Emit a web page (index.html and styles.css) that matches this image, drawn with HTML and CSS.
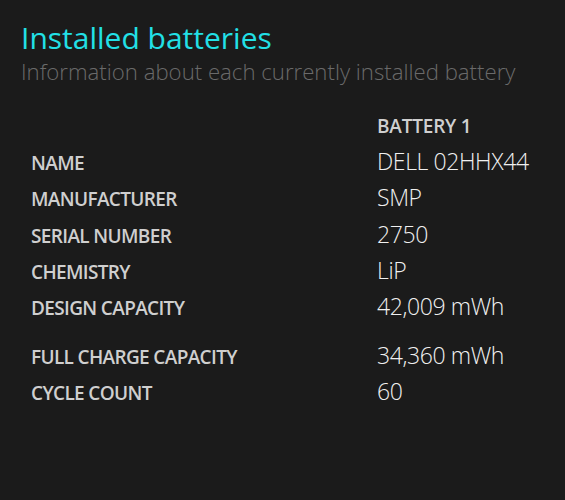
FILE: index.html
```html
<!DOCTYPE html>
<html>
<head>
<meta charset="utf-8">
<link rel="stylesheet" href="styles.css">
</head>
<body>
<div class="page">
  <h1 class="title">Installed batteries</h1>
  <p class="subtitle">Information about each currently installed battery</p>
  <div class="props">
    <div class="row head"><span class="label"></span><span class="colhead">BATTERY 1</span></div>
    <div class="row"><span class="label">NAME</span><span class="value">DELL 02HHX44</span></div>
    <div class="row"><span class="label">MANUFACTURER</span><span class="value">SMP</span></div>
    <div class="row"><span class="label">SERIAL NUMBER</span><span class="value">2750</span></div>
    <div class="row"><span class="label">CHEMISTRY</span><span class="value">LiP</span></div>
    <div class="row"><span class="label">DESIGN CAPACITY</span><span class="value">42,009 mWh</span></div>
    <div class="row spaced"><span class="label">FULL CHARGE CAPACITY</span><span class="value">34,360 mWh</span></div>
    <div class="row"><span class="label">CYCLE COUNT</span><span class="value">60</span></div>
  </div>
</div>
</body>
</html>
```
FILE: styles.css
```css
html, body {
  margin: 0;
  padding: 0;
  background: #1b1b1b;
  height: 100%;
}
.page {
  font-family: "Open Sans", "Noto Sans", sans-serif;
  padding: 20px 0 0 21px;
}
.title {
  margin: 0;
  font-size: 30px;
  font-weight: 400;
  line-height: 36px;
  color: #22e0e6;
}
.subtitle {
  margin: 0;
  font-size: 22.2px;
  font-weight: 300;
  line-height: 32px;
  color: #6a6a6a;
}
.props {
  margin-top: 22px;
  padding-left: 10px;
}
.row {
  display: flex;
  align-items: baseline;
  height: 36.3px;
}
.row.head {
  height: 33px;
}
.row.spaced {
  margin-top: 12.5px;
}
.label {
  width: 346px;
  flex: none;
  font-size: 19px;
  font-weight: 600;
  letter-spacing: -0.65px;
  line-height: 36px;
  color: #cfcfcf;
}
.colhead {
  font-size: 19px;
  font-weight: 600;
  letter-spacing: -0.2px;
  line-height: 33px;
  color: #cfcfcf;
}
.value {
  font-size: 23px;
  font-weight: 300;
  letter-spacing: -0.4px;
  line-height: 36px;
  color: #f0f0f0;
}
```
